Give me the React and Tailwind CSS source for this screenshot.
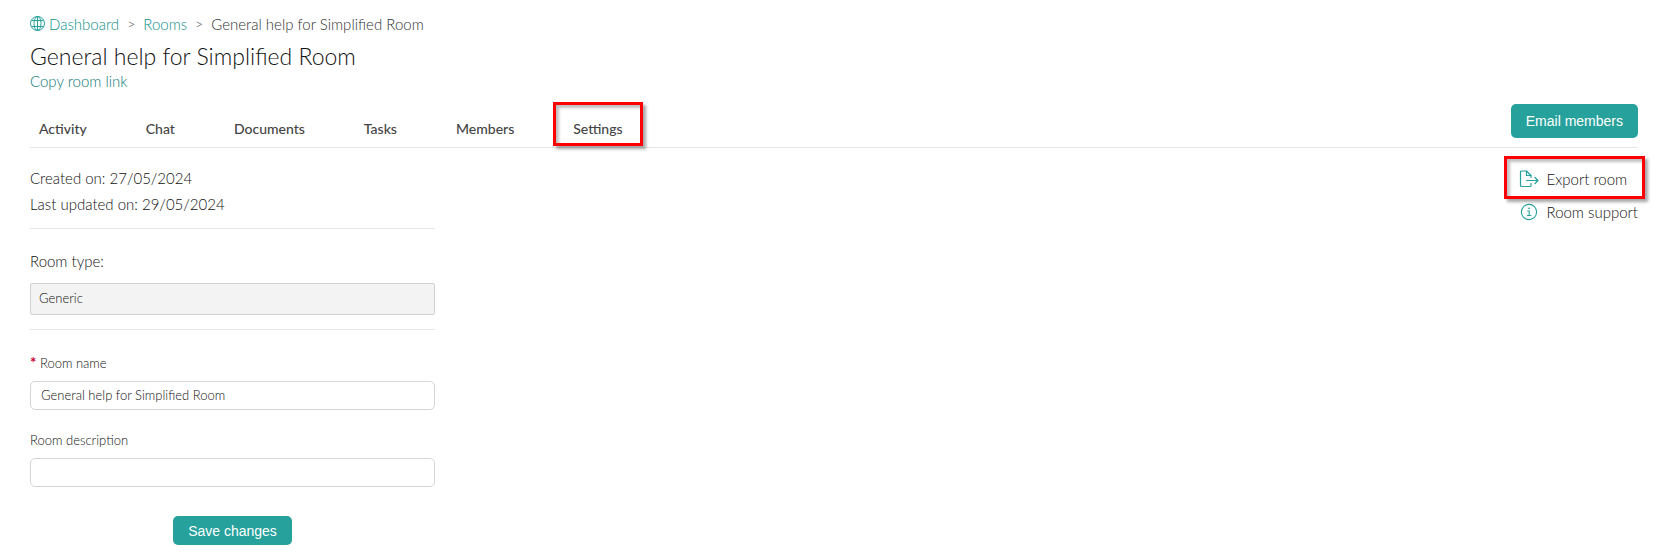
import { useState } from 'react'

const TABS = ['Activity', 'Chat', 'Documents', 'Tasks', 'Members', 'Settings']

const GlobeIcon = () => (
    <svg width="15" height="16" viewBox="0 0 15 16" fill="none" stroke="#26a19c" strokeWidth="1" aria-hidden="true">
        <circle cx="7.500" cy="7.500" r="7" />
        <ellipse cx="7.500" cy="7.500" rx="3.500" ry="7" />
        <path d="M7.500 .5v14M1.500 4.500h12M1.500 10.500h12" />
    </svg>
)

const ExportIcon = () => (
    <svg width="20" height="18" viewBox="0 0 20 18" fill="none" stroke="#26a19c" strokeWidth="1.2" strokeLinejoin="round" strokeLinecap="round" aria-hidden="true">
        <path d="M12 7.500V5.500L7.500 1H2.500Q1.500 1 1.500 2v13.500q0 1 1 1h8.500q1 0 1-1V13.500" />
        <path d="M7.500 1v4.500H12" />
        <path d="M7.500 10.500H19M16 7.500l3 3-3 3" />
    </svg>
)

const InfoIcon = () => (
    <svg width="18" height="18" viewBox="0 0 18 18" fill="none" stroke="#26a19c" strokeWidth="1.1" aria-hidden="true">
        <circle cx="9" cy="9" r="7.6" />
        <path d="M7.300 8h1.900v4.500M7 12.500h4.300" />
        <circle cx="9" cy="5.300" r="0.9" fill="#26a19c" stroke="none" />
    </svg>
)

// Red frame drawn over the part of the page being pointed out
const Highlight = ({ className }) => (
    <span
        className={`pointer-events-none absolute border-3 border-[#ff0000] shadow-[3px_3px_3px_rgba(0,0,0,0.35),inset_3px_3px_3px_rgba(0,0,0,0.25)] ${className}`}
    />
)

const App = () => {
    const [tab, setTab] = useState('Settings')
    const [name, setName] = useState('General help for Simplified Room')
    const [description, setDescription] = useState('')

    return (
        <div className="bg-white pt-[14px] pr-[34px] pb-[10px] pl-[30px] font-['Lato','Open_Sans',sans-serif] text-[15px] leading-5 font-light text-[#111]">
            {/* Breadcrumb */}
            <nav aria-label="Breadcrumb" className="flex items-center gap-2 text-[#333]">
                <a href="#dashboard" className="flex items-center gap-1 text-[#128f8a]">
                    <GlobeIcon />
                    Dashboard
                </a>
                <span className="text-sm text-[#555]">&gt;</span>
                <a href="#rooms" className="text-[#128f8a]">Rooms</a>
                <span className="text-sm text-[#555]">&gt;</span>
                <span>General help for Simplified Room</span>
            </nav>

            <h1 className="mt-2 text-[23px] leading-7">General help for Simplified Room</h1>
            <a href="#copy" className="mt-px block w-fit text-[#0f7a76]">Copy room link</a>

            {/* Tabs */}
            <div className="mt-[13px] flex items-start justify-between border-b border-[#e6e6e6] pb-2">
                <div role="tablist" className="flex gap-[59px] pt-[15px] pl-[9px]">
                    {TABS.map((item) => (
                        <button
                            key={item}
                            type="button"
                            role="tab"
                            aria-selected={tab === item}
                            onClick={() => setTab(item)}
                            className="relative text-sm leading-5 font-medium text-[#444]"
                        >
                            {item}
                            {tab === item && <Highlight className="-top-[17px] -right-[20px] -bottom-[7px] -left-[20px]" />}
                        </button>
                    ))}
                </div>
                <button
                    type="button"
                    className="h-[34px] rounded-[5px] bg-[#26a19c] px-[15px] font-['Liberation_Sans',Arial,sans-serif] text-sm font-normal text-white"
                >
                    Email members
                </button>
            </div>

            <div className="flex items-start justify-between">
                {/* Settings form */}
                <form className="w-[405px] pt-[17px]" onSubmit={(e) => e.preventDefault()}>
                    <div className="border-b border-[#e6e6e6] pb-[11px] leading-[26px]">
                        <p>Created on: 27/05/2024</p>
                        <p>Last updated on: 29/05/2024</p>
                    </div>

                    <div className="border-b border-[#e6e6e6] pt-[22px] pb-[14px]">
                        <label htmlFor="type" className="block">Room type:</label>
                        <input
                            id="type"
                            disabled
                            value="Generic"
                            className="mt-3 block h-8 w-full rounded-xs border border-[#d2d2d2] bg-[#f3f3f3] px-2 pb-[2px] text-[13px]"
                        />
                    </div>

                    <label htmlFor="name" className="mt-[22px] block text-[13px] leading-5">
                        <span className="text-[15px] font-bold text-[#cc0033]">*</span> Room name
                    </label>
                    <input
                        id="name"
                        value={name}
                        onChange={(e) => setName(e.target.value)}
                        className="mt-2 block h-[29px] w-full rounded-[5px] border border-[#d6d6d6] px-[10px] pb-[2px] text-[13px]"
                    />

                    <label htmlFor="description" className="mt-5 block text-[13px] leading-5">Room description</label>
                    <input
                        id="description"
                        value={description}
                        onChange={(e) => setDescription(e.target.value)}
                        className="mt-2 block h-[29px] w-full rounded-[5px] border border-[#d6d6d6] px-[10px] pb-[2px] text-[13px]"
                    />

                    <button
                        type="submit"
                        className="mx-auto mt-[29px] block h-[29px] rounded-[5px] bg-[#26a19c] px-[15px] font-['Liberation_Sans',Arial,sans-serif] text-sm font-normal text-white"
                    >
                        Save changes
                    </button>
                </form>

                {/* Room actions */}
                <div className="flex flex-col gap-[13px] pt-[21px]">
                    <a href="#export" className="relative flex items-center gap-2">
                        <ExportIcon />
                        Export room
                        <Highlight className="-top-[13px] -right-[7px] -bottom-[10px] -left-[15px]" />
                    </a>
                    <a href="#support" className="flex items-center gap-[9px] pl-px">
                        <InfoIcon />
                        Room support
                    </a>
                </div>
            </div>
        </div>
    )
}

export default App
